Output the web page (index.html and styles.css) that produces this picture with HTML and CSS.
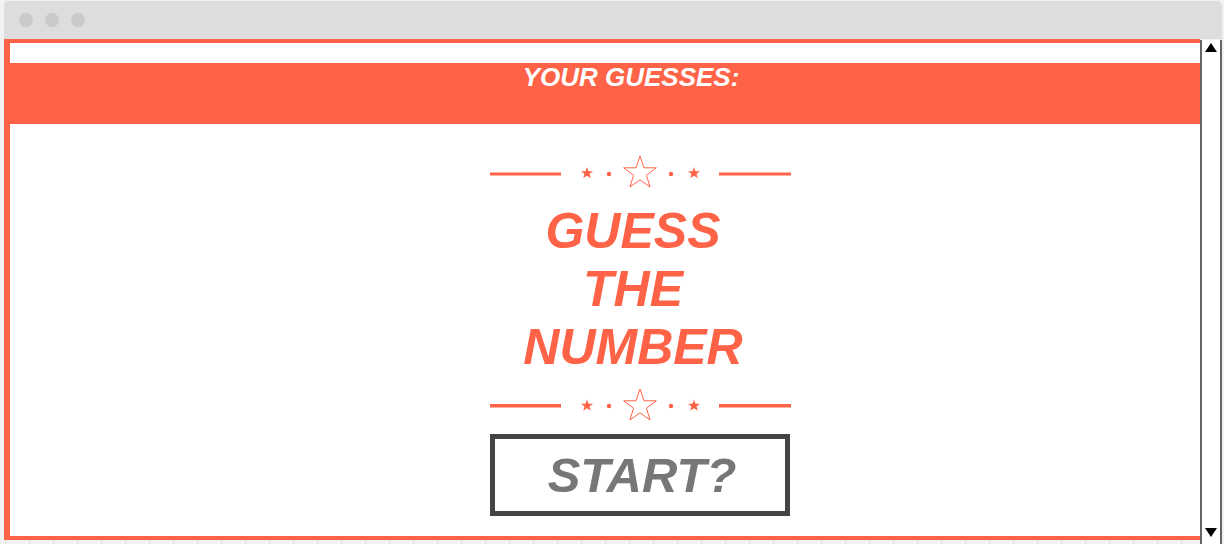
FILE: index.html
```html
<!DOCTYPE html>
<html lang="en">
<head>
<meta charset="utf-8">
<title>Guess the Number</title>
<link rel="stylesheet" href="styles.css">
</head>
<body>
<div class="window">
  <div class="titlebar">
    <span class="dot"></span><span class="dot"></span><span class="dot"></span>
  </div>
  <div class="viewport">
    <div class="page">
      <div class="content">
        <div class="spacer"></div>
        <div class="band"><h2 class="band-title">YOUR GUESSES:</h2></div>
        <svg class="deco deco-top" width="301" height="36" viewBox="0 0 301 36">
          <rect x="0" y="18.5" width="71" height="3" fill="#ff6347"/>
          <rect x="229" y="18.5" width="72" height="3" fill="#ff6347"/>
          <polygon fill="#ff6347" points="97,13 98.5,17.2 103,17.3 99.5,20 100.8,24.3 97,21.8 93.2,24.3 94.5,20 91,17.3 95.5,17.2"/>
          <polygon fill="#ff6347" points="204,13 205.5,17.2 210,17.3 206.5,20 207.8,24.3 204,21.8 200.2,24.3 201.5,20 198,17.3 202.5,17.2"/>
          <circle cx="119" cy="20" r="2.2" fill="#ff6347"/>
          <circle cx="181" cy="20" r="2.2" fill="#ff6347"/>
          <polygon fill="none" stroke="#ff6347" stroke-width="1" points="150,2 154,13.8 166.3,13.8 156.4,21.2 160.1,33 150,25.8 139.9,33 143.6,21.2 133.7,13.8 146,13.8"/>
        </svg>
        <h1 class="title">GUESS<br>THE<br>NUMBER</h1>
        <svg class="deco deco-bottom" width="301" height="36" viewBox="0 0 301 36">
          <rect x="0" y="18" width="71" height="3.5" fill="#ff6347"/>
          <rect x="229" y="18" width="72" height="3.5" fill="#ff6347"/>
          <polygon fill="#ff6347" points="97,13.5 98.5,17.7 103,17.8 99.5,20.5 100.8,24.8 97,22.3 93.2,24.8 94.5,20.5 91,17.8 95.5,17.7"/>
          <polygon fill="#ff6347" points="204,13.5 205.5,17.7 210,17.8 206.5,20.5 207.8,24.8 204,22.3 200.2,24.8 201.5,20.5 198,17.8 202.5,17.7"/>
          <circle cx="119" cy="20" r="2.2" fill="#ff6347"/>
          <circle cx="181" cy="20" r="2.2" fill="#ff6347"/>
          <polygon fill="none" stroke="#ff6347" stroke-width="1" points="150,3 154,14.8 166.3,14.8 156.4,22.2 160.1,34 150,26.8 139.9,34 143.6,22.2 133.7,14.8 146,14.8"/>
        </svg>
        <button class="start">START?</button>
      </div>
    </div>
    <div class="scrollbar">
      <svg class="arrow arrow-up" width="12" height="9" viewBox="0 0 12 9"><polygon points="6,0 12,9 0,9" fill="#000"/></svg>
      <svg class="arrow arrow-down" width="12" height="9" viewBox="0 0 12 9"><polygon points="0,0 12,0 6,9" fill="#000"/></svg>
    </div>
  </div>
</div>
</body>
</html>
```

FILE: styles.css
```css
html, body {
  margin: 0;
  padding: 0;
}
body {
  width: 1224px;
  height: 544px;
  overflow: hidden;
  background-color: #f2f2f2;
  background-image: repeating-linear-gradient(90deg, transparent 0, transparent 23px, #e0e0e0 23px, #e0e0e0 24px);
  background-position: 6px 0;
  font-family: "Liberation Sans", Arial, sans-serif;
}
.window {
  margin: 1px 0 0 4px;
  width: 1218px;
}
.titlebar {
  height: 38px;
  background: #dddddd;
  border-radius: 5px 5px 0 0;
  display: flex;
  align-items: center;
  gap: 12px;
  padding-left: 15px;
}
.dot {
  width: 14px;
  height: 14px;
  border-radius: 50%;
  background: #c9c9c9;
}
.viewport {
  display: flex;
  align-items: flex-start;
}
.page {
  width: 1190px;
  height: 493px;
  border-top: 4px solid #ff6347;
  border-left: 6px solid #ff6347;
  border-bottom: 4px solid #ff6347;
  background: #ffffff;
  overflow: hidden;
}
.content {
  width: 1260px;
  display: flex;
  flex-direction: column;
  align-items: center;
}
.spacer {
  height: 20px;
  align-self: stretch;
}
.band {
  align-self: stretch;
  height: 61px;
  background: #ff6347;
  display: flex;
  justify-content: center;
  padding-right: 18px;
}
.band-title {
  margin: 0;
  color: #ffffff;
  font-size: 26px;
  font-style: italic;
  font-weight: bold;
  line-height: 28px;
}
.deco {
  display: block;
}
.deco-top {
  margin-top: 30px;
}
.title {
  margin: 12px 0 0 0;
  padding-right: 14px;
  color: #ff6347;
  font-size: 50px;
  font-style: italic;
  font-weight: bold;
  line-height: 58px;
  text-align: center;
}
.deco-bottom {
  margin-top: 10px;
}
.start {
  margin-top: 12px;
  width: 300px;
  height: 82px;
  border: 5px solid #444444;
  background: #ffffff;
  color: #777777;
  font-family: "Liberation Sans", Arial, sans-serif;
  font-size: 49px;
  font-style: italic;
  font-weight: bold;
  line-height: 72px;
  padding: 0 0 0 4px;
  text-align: center;
}
.scrollbar {
  margin-top: 1px;
  width: 18px;
  height: 510px;
  border-left: 2px solid #666666;
  border-right: 2px solid #666666;
  background: #ffffff;
  display: flex;
  flex-direction: column;
  justify-content: space-between;
  align-items: center;
}
.arrow {
  display: block;
}
.arrow-up {
  margin-top: 3px;
}
.arrow-down {
  margin-bottom: 13px;
}
```
